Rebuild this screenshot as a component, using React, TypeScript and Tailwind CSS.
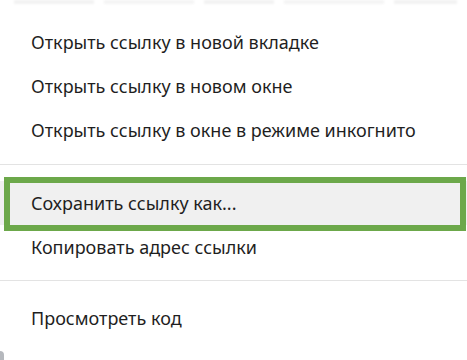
import React from "react";

const Row = ({ children }: { children: React.ReactNode }) => (
  <div className="h-[44px] flex items-center pl-[31px] text-[18px] text-[#1f1f1f] whitespace-nowrap">
    {children}
  </div>
);

export default function App() {
  return (
    <div
      className="w-[467px] h-[360px] overflow-hidden bg-white relative"
      style={{ fontFamily: '"Noto Sans", "Open Sans", sans-serif' }}
    >
      <div className="h-[8px] flex items-start gap-[10px] pl-[14px] pr-[10px]">
        <div className="h-[4px] w-[80px] bg-[#f2f2f2] blur-[1px]" />
        <div className="h-[4px] w-[90px] bg-[#f4f4f4] blur-[1px]" />
        <div className="h-[4px] w-[70px] bg-[#f2f2f2] blur-[1px]" />
        <div className="h-[4px] w-[100px] bg-[#f4f4f4] blur-[1px]" />
        <div className="h-[4px] flex-1 bg-[#f2f2f2] blur-[1px]" />
      </div>
      <div className="h-[12px]" />
      <Row>Открыть ссылку в новой вкладке</Row>
      <Row>Открыть ссылку в новом окне</Row>
      <Row>Открыть ссылку в окне в режиме инкогнито</Row>
      <div className="mt-[12px] mb-[16px] h-px bg-[#e3e3e3]" />
      <div className="relative bg-[#f0f0f0]">
        <Row>Сохранить ссылку как...</Row>
        <div className="absolute left-[4px] right-[1px] top-[-4px] bottom-[-6px] border-[6px] border-[#6ca84a] pointer-events-none" />
      </div>
      <Row>Копировать адрес ссылки</Row>
      <div className="mt-[11px] mb-[15px] h-px bg-[#e3e3e3]" />
      <Row>Просмотреть код</Row>
      <div className="absolute left-0 bottom-0 w-[4px] h-[9px] bg-[#b5b8bd] rounded-tr-[6px]" />
    </div>
  );
}
